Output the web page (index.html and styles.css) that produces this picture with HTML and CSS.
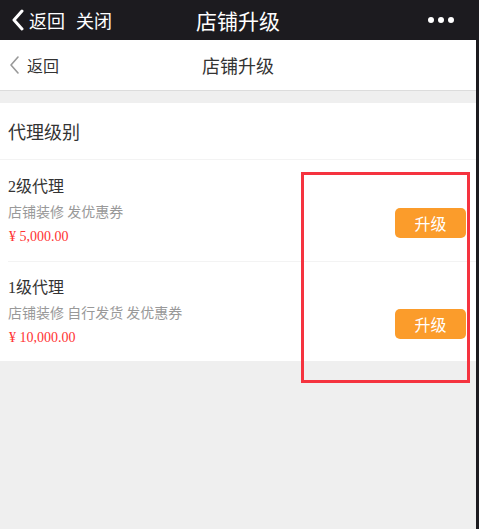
FILE: index.html
```html
<html>
<head>
    <title>店铺升级</title>
    <link rel="stylesheet" href="styles.css">
</head>
<body>
<div class="screen">
    <div class="topbar">
        <div class="top-left">
            <svg class="top-back" width="14" height="22" viewBox="0 0 14 22">
                <path d="M11 2 L3 11 L11 20" fill="none" stroke="#fff" stroke-width="3" stroke-linecap="round" stroke-linejoin="round"/>
            </svg>
            <span>返回</span>
            <span class="close">关闭</span>
        </div>
        <div class="top-title">店铺升级</div>
        <div class="dots"><i></i><i></i><i></i></div>
    </div>
    <div class="navbar">
        <div class="back">
            <svg width="12" height="20" viewBox="0 0 12 20">
                <path d="M9 2 L2 10 L9 18" fill="none" stroke="#999" stroke-width="1.6" stroke-linecap="round" stroke-linejoin="round"/>
            </svg>
            <span>返回</span>
        </div>
        <div class="nav-title">店铺升级</div>
    </div>
    <div class="section">
        <div class="section-head">代理级别</div>
        <div class="item">
            <div class="info">
                <div class="level">2级代理</div>
                <div class="perks">店铺装修 发优惠券</div>
                <div class="price">¥ 5,000.00</div>
            </div>
            <button class="upgrade">升级</button>
        </div>
        <div class="item">
            <div class="info">
                <div class="level">1级代理</div>
                <div class="perks">店铺装修 自行发货 发优惠券</div>
                <div class="price">¥ 10,000.00</div>
            </div>
            <button class="upgrade">升级</button>
        </div>
    </div>
    <div class="mark"></div>
</div>
</body>
</html>
```

FILE: styles.css
```css
*{
    margin: 0;
    padding: 0;
    box-sizing: border-box;
}
body{
    background: #1c1b1f;
    font-family: "Noto Sans CJK SC", "Noto Sans", sans-serif;
}
.screen{
    width: 476px;
    height: 529px;
    background: #efefef;
    position: relative;
}
.topbar{
    height: 40px;
    background: #1c1b1f;
    color: #fff;
    display: flex;
    align-items: center;
    position: relative;
}
.top-left{
    display: flex;
    align-items: center;
    padding-left: 11px;
    font-size: 18px;
}
.top-back{
    margin-right: 4px;
}
.top-left .close{
    margin-left: 11px;
}
.top-title{
    position: absolute;
    left: 0;
    right: 0;
    text-align: center;
    font-size: 21px;
    pointer-events: none;
}
.dots{
    margin-left: auto;
    margin-right: 22px;
    display: flex;
    gap: 4px;
}
.dots i{
    width: 6px;
    height: 6px;
    border-radius: 50%;
    background: #fff;
}
.navbar{
    height: 51px;
    background: #fff;
    border-bottom: 1px solid #dcdcdc;
    display: flex;
    align-items: center;
    position: relative;
}
.back{
    display: flex;
    align-items: center;
    padding-left: 9px;
    gap: 6px;
    font-size: 16px;
    color: #333;
}
.nav-title{
    position: absolute;
    left: 0;
    right: 0;
    text-align: center;
    font-size: 18px;
    color: #333;
}
.section{
    margin-top: 12px;
    background: #fff;
}
.section-head{
    height: 57px;
    line-height: 57px;
    padding-left: 8px;
    font-size: 18px;
    color: #333;
    border-bottom: 1px solid #f3f3f3;
}
.item{
    margin-left: 8px;
    height: 101px;
    display: flex;
    align-items: center;
    padding-right: 10px;
}
.item + .item{
    border-top: 1px solid #f3f3f3;
    height: 100px;
}
.info{
    flex: 1;
    display: flex;
    flex-direction: column;
    gap: 4px;
    padding-top: 1px;
}
.level{
    font-family: "Liberation Serif", "Noto Sans CJK SC", serif;
    font-size: 16px;
    color: #333;
    line-height: 21px;
}
.perks{
    font-size: 14px;
    color: #999;
    line-height: 21px;
}
.price{
    font-family: "Liberation Serif", "Noto Sans CJK SC", serif;
    font-size: 14px;
    color: #f33;
    line-height: 21px;
    padding-left: 1px;
}
.upgrade{
    border: 0;
    outline: 0;
    width: 71px;
    height: 30px;
    border-radius: 5px;
    background: #fb9c2b;
    color: #fff;
    font-family: "Noto Sans CJK SC", sans-serif;
    font-size: 16px;
    margin-top: 25px;
}
.mark{
    position: absolute;
    left: 301px;
    top: 172px;
    width: 169px;
    height: 211px;
    border: 3px solid #f5333f;
}
```
